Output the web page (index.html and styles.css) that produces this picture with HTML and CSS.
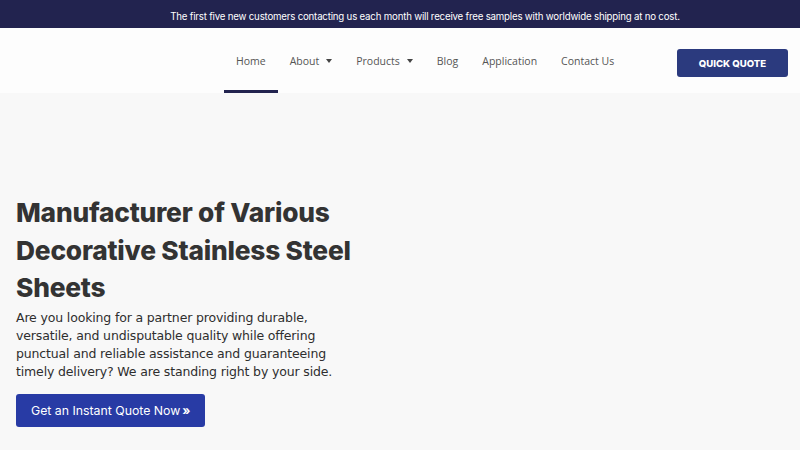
FILE: index.html
```html
<!DOCTYPE html>
<html lang="en">
<head>
  <meta charset="UTF-8">
  <title>Decorative Stainless Steel Sheets</title>
  <link rel="stylesheet" href="styles.css">
</head>
<body>
  <div class="topbar">The first five new customers contacting us each month will receive free samples with worldwide shipping at no cost.</div>

  <header class="header">
    <nav class="nav">
      <a href="#" class="nav-item active">Home</a>
      <a href="#" class="nav-item">About <span class="caret"></span></a>
      <a href="#" class="nav-item">Products <span class="caret"></span></a>
      <a href="#" class="nav-item">Blog</a>
      <a href="#" class="nav-item">Application</a>
      <a href="#" class="nav-item">Contact Us</a>
    </nav>
    <a href="#" class="quick-quote">Quick Quote</a>
  </header>

  <section class="hero">
    <div class="hero-text">
      <h1>Manufacturer of Various Decorative Stainless Steel Sheets</h1>
      <p>Are you looking for a partner providing durable, versatile, and undisputable quality while offering punctual and reliable assistance and guaranteeing timely delivery? We are standing right by your side.</p>
      <a href="#" class="cta">Get an Instant Quote Now<span class="chev">&raquo;</span></a>
    </div>
  </section>
</body>
</html>
```

FILE: styles.css
```css
body { margin: 0; background: #f8f8f8; font-family: "DejaVu Sans", sans-serif; color: #333; }
a { text-decoration: none; }

.topbar { background: #22234f; color: #fff; height: 28px; line-height: 33px; text-align: center; padding-left: 50px; font-family: "Inter", sans-serif; font-size: 9.7px; letter-spacing: -0.2px; }

.header { background: #fdfdfd; height: 65px; display: flex; align-items: flex-start; }
.nav { display: flex; margin-left: 224px; height: 65px; }
.nav-item { font-family: "Open Sans", sans-serif; font-size: 10.5px; color: #555; padding: 4px 12px 0; height: 58px; display: flex; align-items: center; border-bottom: 3px solid transparent; }
.nav-item.active { border-bottom-color: #22234f; }
.caret { display: inline-block; width: 0; height: 0; border-left: 3.5px solid transparent; border-right: 3.5px solid transparent; border-top: 4px solid #444; margin-left: 7px; }
.quick-quote { margin: 21px 12px 0 auto; width: 111px; height: 28px; line-height: 29px; text-align: center; background: #2b3a7e; color: #fff; border-radius: 3px; text-transform: uppercase; font-family: "Inter", sans-serif; font-weight: 800; font-size: 9.6px; }

.hero { padding: 101px 16px 0; }
.hero-text { width: 350px; }
.hero h1 { margin: 0; font-family: "Inter", sans-serif; font-weight: 800; font-size: 26.3px; line-height: 37.5px; color: #333; letter-spacing: -0.2px; }
.hero p { max-width: 332px; margin: 2px 0 13px; font-size: 12.5px; line-height: 18px; color: #2e2e2e; letter-spacing: -0.15px; }
.cta { display: inline-block; background: #283ba5; color: #fff; border-radius: 3px; padding: 0 15px; height: 33px; line-height: 33px; font-family: "Inter", sans-serif; font-size: 12.3px; }
.chev { margin-left: 2px; font-weight: 700; }
```
